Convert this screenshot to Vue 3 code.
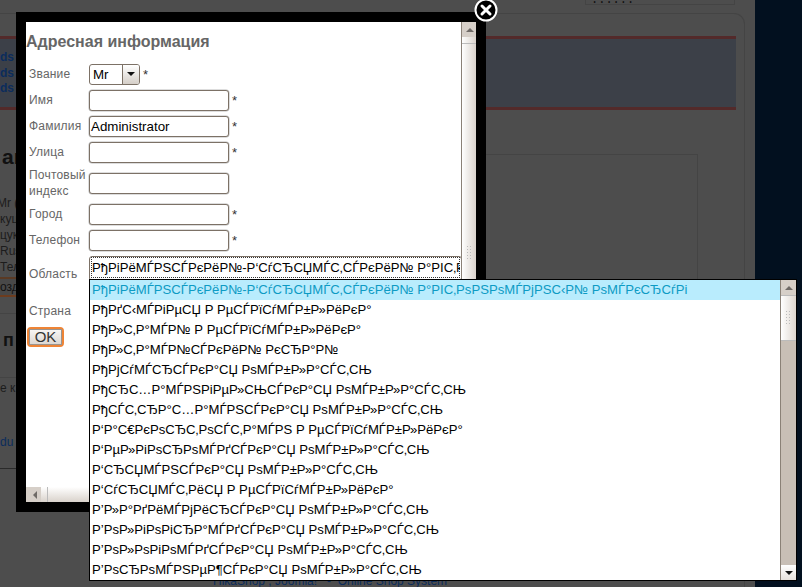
<script setup>
const map = {
  'а':'Р°','б':'Р±','в':'РІ','г':'Рі','д':'Рґ','е':'Рµ','ж':'Р¶','з':'Р·','и':'Рё','й':'Р№','к':'Рє','л':'Р»','м':'Рј','н':'РЅ','о':'Рѕ','п':'Рї',
  'р':'СЂ','с':'СЃ','т':'С‚','у':'Сѓ','ф':'С„','х':'С…','ц':'С†','ч':'С‡','ш':'С€','щ':'С‰','ъ':'СЉ','ы':'С‹','ь':'СЊ','э':'СЌ','ю':'СЋ','я':'СЏ',
  'А':'Рђ','Б':'Р‘','В':'Р’','Р':'Р\u00a0','\u0301':'МЃ'
}
const garble = (s) => [...s].map((c) => map[c] ?? c).join('')
const regions = [
  'Аги\u0301нский-Буря\u0301тский автоно\u0301мный о\u0301круг',
  'Ады\u0301гея Респу\u0301блика',
  'Алта\u0301й Респу\u0301блика',
  'Алта\u0301йский край',
  'Аму\u0301рская о\u0301бласть',
  'Арха\u0301нгельская о\u0301бласть',
  'Астраха\u0301нская о\u0301бласть',
  'Башкортоста\u0301н Респу\u0301блика',
  'Белгоро\u0301дская о\u0301бласть',
  'Бря\u0301нская о\u0301бласть',
  'Буря\u0301тия Респу\u0301блика',
  'Влади\u0301мирская о\u0301бласть',
  'Волгогра\u0301дская о\u0301бласть',
  'Волого\u0301дская о\u0301бласть',
  'Воро\u0301нежская о\u0301бласть'
].map(garble)
const fields = [
  { label: 'Имя', value: '', star: true },
  { label: 'Фамилия', value: 'Administrator', star: true },
  { label: 'Улица', value: '', star: true },
  { label: 'Почтовый индекс', value: '', star: false, tall: true },
  { label: 'Город', value: '', star: true },
  { label: 'Телефон', value: '', star: true }
]
</script>

<template>
  <div class="screen">
    <div class="page">
      <div class="top"><div class="topbox">......</div></div>
      <div class="panel">
        <div class="band">
          <b>ds</b><b>ds</b><b>ds</b>
        </div>
        <div class="lower">
          <div class="frag">
            <div class="h">ац</div>
            <div class="small first">Mr (</div>
            <div class="small">куц</div>
            <div class="small">цук</div>
            <div class="small">Rus</div>
            <div class="small">Тел</div>
            <div class="btnfrag">озд</div>
            <div class="rule"></div>
            <div class="h2">п</div>
            <div class="rule second"></div>
            <div class="small after">е к</div>
            <div class="link">du</div>
            <div class="rule third"></div>
          </div>
          <div class="box"></div>
        </div>
        <div class="foot">HikaShop , Joomla! &nbsp; - &nbsp;Online Shop System</div>
      </div>
    </div>
    <div class="night"></div>

    <div class="modal">
      <div class="inner">
        <div class="content">
          <h3>Адресная информация</h3>
          <div class="row first">
            <span class="lab">Звание</span>
            <span class="sel"><span class="selval">Mr</span><span class="selbtn"><i class="down"></i></span></span>
            <span class="star">*</span>
          </div>
          <div v-for="f in fields" :key="f.label" class="row" :class="{ tall: f.tall }">
            <span class="lab">{{ f.label }}</span>
            <span class="inp">{{ f.value }}</span>
            <span v-if="f.star" class="star">*</span>
          </div>
          <div class="row region">
            <span class="lab">Область</span>
            <span class="regionsel"><span>{{ regions[0] }}</span></span>
          </div>
          <div class="row country"><span class="lab">Страна</span></div>
          <div class="okwrap"><span class="ok"><span>OK</span></span></div>
        </div>
        <div class="vbar">
          <span class="sbtn"><i class="up"></i></span>
          <span class="vtrack"><span class="vthumb"></span><span class="grip vgrip"></span></span>
        </div>
        <div class="hbar">
          <span class="sbtn h"><i class="left"></i></span>
          <span class="hthumb"></span>
        </div>
      </div>
    </div>

    <button class="close" aria-label="Закрыть">
      <svg width="26" height="26" viewBox="0 0 26 26">
        <circle cx="13" cy="13" r="10.5" fill="#000" stroke="#fff" stroke-width="2" />
        <path d="M9 9 L17 17 M17 9 L9 17" stroke="#fff" stroke-width="3" stroke-linecap="round" />
      </svg>
    </button>

    <div class="drop">
      <div class="list">
        <div v-for="(r, i) in regions" :key="i" class="opt" :class="{ on: i === 0 }">{{ r }}</div>
      </div>
      <div class="dbar">
        <span class="sbtn"><i class="up"></i></span>
        <span class="dthumb"><span class="grip"></span></span>
        <span class="dtrack"></span>
        <span class="sbtn light"><i class="down"></i></span>
      </div>
    </div>
  </div>
</template>

<style>
html, body { margin: 0; padding: 0; overflow: hidden; }
</style>

<style scoped>
.screen {
  position: relative;
  width: 802px;
  height: 587px;
  display: flex;
  overflow: hidden;
  font-family: "Liberation Sans", Arial, sans-serif;
}
.page {
  width: 755px;
  height: 587px;
  background: #4d4d4d;
  display: flex;
  flex-direction: column;
  flex: none;
  overflow: hidden;
}
.night { flex: 1; background: #02101f; }
.top { height: 13px; display: flex; justify-content: flex-end; padding-right: 20px; flex: none; box-sizing: border-box; }
.topbox { width: 150px; height: 5px; border: 1px solid #444; border-top: 0; font: 12px "Liberation Mono", monospace; color: #111; line-height: 0; padding-left: 5px; box-sizing: border-box; overflow: hidden; }
.panel {
  width: 745px;
  flex: 1;
  min-height: 0;
  box-sizing: border-box;
  border-top: 1px solid #444;
  border-right: 1px solid #444;
  border-top-right-radius: 11px;
  display: flex;
  flex-direction: column;
}
.band {
  margin-top: 22px;
  width: 736px;
  height: 74px;
  box-sizing: border-box;
  flex: none;
  background: #3c4048;
  border-top: 3px solid #532a2a;
  border-bottom: 3px solid #532a2a;
  display: flex;
  flex-direction: column;
  padding-top: 11px;
  font-size: 12px;
  line-height: 15.5px;
  color: #0b2c5c;
}
.lower { display: flex; flex: 1; min-height: 0; }
.frag { width: 476px; flex: none; padding-top: 36px; display: flex; flex-direction: column; box-sizing: border-box; }
.box { width: 222px; height: 420px; margin-top: 44px; flex: none; border-top: 1px solid #444; border-right: 1px solid #444; box-sizing: border-box; }
.h { font: bold 21px/22px "Liberation Sans", sans-serif; color: #111; padding-left: 2px; }
.small { font-size: 12px; line-height: 16px; color: #1c1c1c; }
.small.first { margin-top: 27px; margin-left: -3px; }
.btnfrag { margin-top: 2px; font-size: 12px; line-height: 16px; color: #111; background: #484848; border-top: 2px solid #5a3a24; border-bottom: 2px solid #6d3c1e; width: 16px; box-sizing: border-box; height: 20px; white-space: nowrap; }
.rule { height: 1px; background: #444; margin-top: 16px; width: 16px; flex: none; }
.rule.second { margin-top: 26px; }
.rule.third { margin-top: 18px; background: #2a2a2a; }
.h2 { font: bold 18px/22px "Liberation Sans", sans-serif; color: #111; margin-top: 15px; padding-left: 3px; }
.small.after { margin-top: 2px; }
.link { margin-top: 38px; font-size: 12px; line-height: 16px; color: #0b2c5c; }
.foot { flex: none; margin-top: auto; padding-left: 213px; font-size: 12px; line-height: 12px; height: 12px; color: #0b2c5c; white-space: nowrap; }

.modal {
  position: absolute;
  left: 16px;
  top: 12px;
  width: 470px;
  height: 500px;
  box-sizing: border-box;
  border: 10px solid #000;
  background: #fff;
}
.inner { position: relative; width: 450px; height: 480px; overflow: hidden; }
.content { width: 435px; height: 465px; overflow: hidden; color: #666; font-size: 12px; }
h3 { margin: 0; font: bold 16px/18px "Liberation Sans", sans-serif; color: #666; padding-top: 11px; height: 20px; }
.row { display: flex; align-items: center; height: 26px; }
.row.first { margin-top: 8px; }
.row.tall { height: 36px; }
.lab { flex: none; padding-left: 3px; width: 60px; line-height: 16px; letter-spacing: 0.2px; }
.sel { display: flex; width: 51px; height: 21px; box-sizing: border-box; border: 1px solid #7c7166; border-radius: 3px; color: #000; font-size: 13.33px; overflow: hidden; }
.selval { flex: 1; padding-left: 3px; line-height: 19px; }
.selbtn { width: 16px; border-left: 1px solid #7c7166; background: linear-gradient(#fff, #d5cfc8); display: flex; align-items: center; justify-content: center; }
.star { margin-left: 3px; color: #333; font-size: 13px; }
.inp { width: 140px; height: 21px; box-sizing: border-box; border: 1px solid #7c7166; border-radius: 3px; color: #000; font-size: 13.33px; line-height: 20px; padding-left: 1px; background: #fff; box-shadow: 0 0 0 0.5px #bbb; }
.row.region { height: 30px; margin-top: 2px; align-items: flex-start; }
.row.region .lab { margin-top: 11px; }
.regionsel { width: 373px; height: 25px; margin-top: 1px; flex: none; box-sizing: border-box; border: 1px solid #7c7166; border-radius: 3px; color: #000; font-size: 13.13px; padding: 0 1px; overflow: hidden; white-space: nowrap; }
.regionsel span { display: block; outline: 1px dotted #333; outline-offset: -1px; height: 21px; line-height: 21px; padding-left: 1px; overflow: hidden; }
.row.country { margin-top: 13px; }
.okwrap { padding: 3px 0 0 1px; }
.ok { display: block; width: 37px; height: 20px; box-sizing: border-box; border: 2px solid #ee8436; border-radius: 4px; box-shadow: inset 0 0 0 0.5px #b9651f; }
.ok span { display: block; height: 16px; box-sizing: border-box; border: 1px solid #9a948e; background: linear-gradient(#f7f5f3, #dcd7d2); color: #333; font-size: 15px; line-height: 14px; text-align: center; }

.vbar { position: absolute; right: 0; top: 0; width: 15px; height: 465px; background: linear-gradient(90deg, #fff, #d9d2cb); border-left: 1px solid #8a8177; box-sizing: border-box; display: flex; flex-direction: column; }
.vtrack { flex: 1; display: flex; flex-direction: column; align-items: center; }
.vthumb { display: block; width: 100%; height: 6px; border-bottom: 1px solid #bbb; }
.vgrip { margin-top: 201px; }
.hbar { position: absolute; left: 0; bottom: 0; width: 450px; height: 15px; background: linear-gradient(#fff, #d9d2cb); display: flex; }
.hthumb { width: 6px; border-right: 1px solid #bbb; }
.sbtn { height: 15px; width: 15px; flex: none; background: #d6cfc8; display: flex; align-items: center; justify-content: center; box-sizing: border-box; }
.sbtn.light { background: linear-gradient(#fff, #e6e1dc); }
.up { width: 0; height: 0; border: 4px solid transparent; border-top: 0; border-bottom: 4px solid #6f6a66; }
.down { width: 0; height: 0; border: 4px solid transparent; border-bottom: 0; border-top: 4px solid #111; }
.left { width: 0; height: 0; border: 4px solid transparent; border-left: 0; border-right: 4px solid #6f6a66; }

.close { position: absolute; left: 473px; top: -3px; width: 26px; height: 26px; padding: 0; border: 0; background: none; display: block; }

.drop {
  position: absolute;
  left: 89px;
  top: 279px;
  width: 708px;
  height: 302px;
  box-sizing: border-box;
  border: 1px solid #000;
  background: #fff;
  display: flex;
}
.list { flex: 1; overflow: hidden; }
.opt { height: 20px; line-height: 20px; padding-left: 2px; font-size: 13.13px; color: #000; white-space: nowrap; }
.opt.on { background: #b9ecfd; color: #0d9bc4; }
.dbar { width: 15px; background: #c8bfb6; display: flex; flex-direction: column; border-left: 1px solid #8a8177; flex: none; }
.dthumb { height: 46px; background: linear-gradient(90deg, #fff, #ddd6cf); border-top: 1px solid #bbb; border-bottom: 1px solid #bbb; box-sizing: border-box; display: flex; align-items: center; justify-content: center; }
.grip { width: 7px; height: 16px; background-image: radial-gradient(#bbb 1px, transparent 1px); background-size: 3px 3px; }
.dtrack { flex: 1; }
</style>
